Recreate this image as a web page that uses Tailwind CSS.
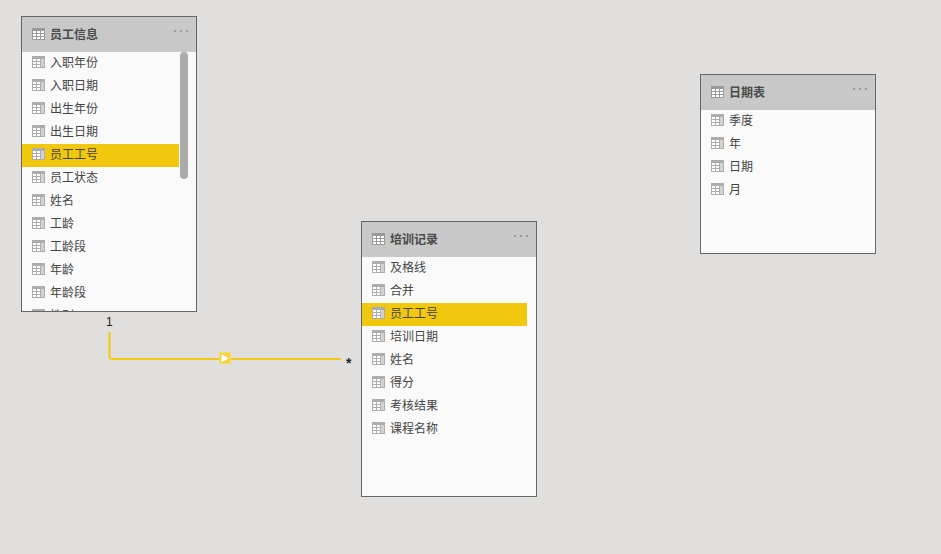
<!DOCTYPE html>
<html><head><meta charset="utf-8"><script src="https://cdn.jsdelivr.net/npm/@tailwindcss/browser@4"></script></head>
<body class="m-0">
<svg width="0" height="0" class="absolute"><defs>
<symbol id="h" viewBox="0 0 13 12"><rect width="13" height="12" fill="#9a9a9a"/><g fill="#fff"><rect x="1" y="3" width="3" height="2"/><rect x="5" y="3" width="3" height="2"/><rect x="9" y="3" width="3" height="2"/><rect x="1" y="6" width="3" height="2"/><rect x="5" y="6" width="3" height="2"/><rect x="9" y="6" width="3" height="2"/><rect x="1" y="9" width="3" height="2"/><rect x="5" y="9" width="3" height="2"/><rect x="9" y="9" width="3" height="2"/></g></symbol>
<symbol id="r" viewBox="0 0 13 12"><rect width="13" height="12" fill="#adadad"/><rect x="9" y="3" width="3" height="8" fill="#d2d2d2"/><g fill="#fff"><rect x="1" y="3" width="3" height="2"/><rect x="5" y="3" width="3" height="2"/><rect x="1" y="6" width="3" height="2"/><rect x="5" y="6" width="3" height="2"/><rect x="1" y="9" width="3" height="2"/><rect x="5" y="9" width="3" height="2"/></g></symbol>
</defs></svg>
<div class="relative w-[941px] h-[554px] overflow-hidden bg-[#e0dfdd] text-[12px] leading-[16px] text-[#444] font-['Noto_Sans_CJK_SC','Liberation_Sans',sans-serif]">

<!-- 员工信息 -->
<section class="absolute left-[21px] top-[16px] w-[176px] h-[296px] border border-[#666] bg-[#fafafa] flex flex-col overflow-hidden">
<header class="h-[35px] shrink-0 bg-[#c8c8c8] flex items-center pb-[1px] pl-[10px] gap-[5px] relative"><svg class="w-[13px] h-[12px]"><use href="#h"/></svg><span class="font-bold text-[#4a4a4a]">员工信息</span><div class="absolute right-[8px] top-[13px] flex gap-[4px]"><i class="w-[2px] h-[2px] bg-[#9a9a9a]"></i><i class="w-[2px] h-[2px] bg-[#9a9a9a]"></i><i class="w-[2px] h-[2px] bg-[#9a9a9a]"></i></div></header>
<div class="relative flex-1 overflow-hidden pr-[17px]">
<span class="absolute right-[8px] top-0 w-[8px] h-[127px] rounded-[4px] bg-[#ababab]"></span>
<div class="flex items-center h-[23px] pb-[3px] pl-[10px] gap-[5px]"><svg class="w-[13px] h-[12px]"><use href="#r"/></svg>入职年份</div>
<div class="flex items-center h-[23px] pb-[3px] pl-[10px] gap-[5px]"><svg class="w-[13px] h-[12px]"><use href="#r"/></svg>入职日期</div>
<div class="flex items-center h-[23px] pb-[3px] pl-[10px] gap-[5px]"><svg class="w-[13px] h-[12px]"><use href="#r"/></svg>出生年份</div>
<div class="flex items-center h-[23px] pb-[3px] pl-[10px] gap-[5px]"><svg class="w-[13px] h-[12px]"><use href="#r"/></svg>出生日期</div>
<div class="flex items-center h-[23px] pb-[3px] pl-[10px] gap-[5px] bg-[#f2c80f]"><svg class="w-[13px] h-[12px]"><use href="#r"/></svg>员工工号</div>
<div class="flex items-center h-[23px] pb-[3px] pl-[10px] gap-[5px]"><svg class="w-[13px] h-[12px]"><use href="#r"/></svg>员工状态</div>
<div class="flex items-center h-[23px] pb-[3px] pl-[10px] gap-[5px]"><svg class="w-[13px] h-[12px]"><use href="#r"/></svg>姓名</div>
<div class="flex items-center h-[23px] pb-[3px] pl-[10px] gap-[5px]"><svg class="w-[13px] h-[12px]"><use href="#r"/></svg>工龄</div>
<div class="flex items-center h-[23px] pb-[3px] pl-[10px] gap-[5px]"><svg class="w-[13px] h-[12px]"><use href="#r"/></svg>工龄段</div>
<div class="flex items-center h-[23px] pb-[3px] pl-[10px] gap-[5px]"><svg class="w-[13px] h-[12px]"><use href="#r"/></svg>年龄</div>
<div class="flex items-center h-[23px] pb-[3px] pl-[10px] gap-[5px]"><svg class="w-[13px] h-[12px]"><use href="#r"/></svg>年龄段</div>
<div class="flex items-center h-[23px] pb-[3px] pl-[10px] gap-[5px]"><svg class="w-[13px] h-[12px]"><use href="#r"/></svg>性别</div>
</div>
</section>

<!-- 培训记录 -->
<section class="absolute left-[361px] top-[221px] w-[176px] h-[276px] border border-[#666] bg-[#fafafa] flex flex-col overflow-hidden">
<header class="h-[35px] shrink-0 bg-[#c8c8c8] flex items-center pb-[1px] pl-[10px] gap-[5px] relative"><svg class="w-[13px] h-[12px]"><use href="#h"/></svg><span class="font-bold text-[#4a4a4a]">培训记录</span><div class="absolute right-[8px] top-[13px] flex gap-[4px]"><i class="w-[2px] h-[2px] bg-[#9a9a9a]"></i><i class="w-[2px] h-[2px] bg-[#9a9a9a]"></i><i class="w-[2px] h-[2px] bg-[#9a9a9a]"></i></div></header>
<div class="flex-1 overflow-hidden pr-[9px]">
<div class="flex items-center h-[23px] pb-[3px] pl-[10px] gap-[5px]"><svg class="w-[13px] h-[12px]"><use href="#r"/></svg>及格线</div>
<div class="flex items-center h-[23px] pb-[3px] pl-[10px] gap-[5px]"><svg class="w-[13px] h-[12px]"><use href="#r"/></svg>合并</div>
<div class="flex items-center h-[23px] pb-[3px] pl-[10px] gap-[5px] bg-[#f2c80f]"><svg class="w-[13px] h-[12px]"><use href="#r"/></svg>员工工号</div>
<div class="flex items-center h-[23px] pb-[3px] pl-[10px] gap-[5px]"><svg class="w-[13px] h-[12px]"><use href="#r"/></svg>培训日期</div>
<div class="flex items-center h-[23px] pb-[3px] pl-[10px] gap-[5px]"><svg class="w-[13px] h-[12px]"><use href="#r"/></svg>姓名</div>
<div class="flex items-center h-[23px] pb-[3px] pl-[10px] gap-[5px]"><svg class="w-[13px] h-[12px]"><use href="#r"/></svg>得分</div>
<div class="flex items-center h-[23px] pb-[3px] pl-[10px] gap-[5px]"><svg class="w-[13px] h-[12px]"><use href="#r"/></svg>考核结果</div>
<div class="flex items-center h-[23px] pb-[3px] pl-[10px] gap-[5px]"><svg class="w-[13px] h-[12px]"><use href="#r"/></svg>课程名称</div>
</div>
</section>

<!-- 日期表 -->
<section class="absolute left-[700px] top-[74px] w-[176px] h-[180px] border border-[#666] bg-[#fafafa] flex flex-col overflow-hidden">
<header class="h-[35px] shrink-0 bg-[#c8c8c8] flex items-center pb-[1px] pl-[10px] gap-[5px] relative"><svg class="w-[13px] h-[12px]"><use href="#h"/></svg><span class="font-bold text-[#4a4a4a]">日期表</span><div class="absolute right-[8px] top-[13px] flex gap-[4px]"><i class="w-[2px] h-[2px] bg-[#9a9a9a]"></i><i class="w-[2px] h-[2px] bg-[#9a9a9a]"></i><i class="w-[2px] h-[2px] bg-[#9a9a9a]"></i></div></header>
<div class="flex-1 overflow-hidden pr-[9px]">
<div class="flex items-center h-[23px] pb-[3px] pl-[10px] gap-[5px]"><svg class="w-[13px] h-[12px]"><use href="#r"/></svg>季度</div>
<div class="flex items-center h-[23px] pb-[3px] pl-[10px] gap-[5px]"><svg class="w-[13px] h-[12px]"><use href="#r"/></svg>年</div>
<div class="flex items-center h-[23px] pb-[3px] pl-[10px] gap-[5px]"><svg class="w-[13px] h-[12px]"><use href="#r"/></svg>日期</div>
<div class="flex items-center h-[23px] pb-[3px] pl-[10px] gap-[5px]"><svg class="w-[13px] h-[12px]"><use href="#r"/></svg>月</div>
</div>
</section>

<!-- relationship -->
<svg class="absolute left-0 top-0" width="941" height="554" fill="none">
<path d="M109.500 332V356Q109.500 359 112.500 359H341" stroke="#f2c80f" stroke-width="2"/>
<rect x="219.500" y="352.500" width="11" height="11" fill="#f5d33f" stroke="#f5dc6a"/>
<path d="M221.500 354V362.500L228.500 358.250Z" fill="#fff"/>
</svg>
<span class="absolute left-[106px] top-[314px] text-[12px] leading-[16px] font-['Liberation_Sans',sans-serif] text-[#222]">1</span>
<span class="absolute left-[346px] top-[355px] text-[14px] leading-[16px] font-bold font-['Liberation_Sans',sans-serif] text-[#222]">*</span>
</div>
</body></html>
